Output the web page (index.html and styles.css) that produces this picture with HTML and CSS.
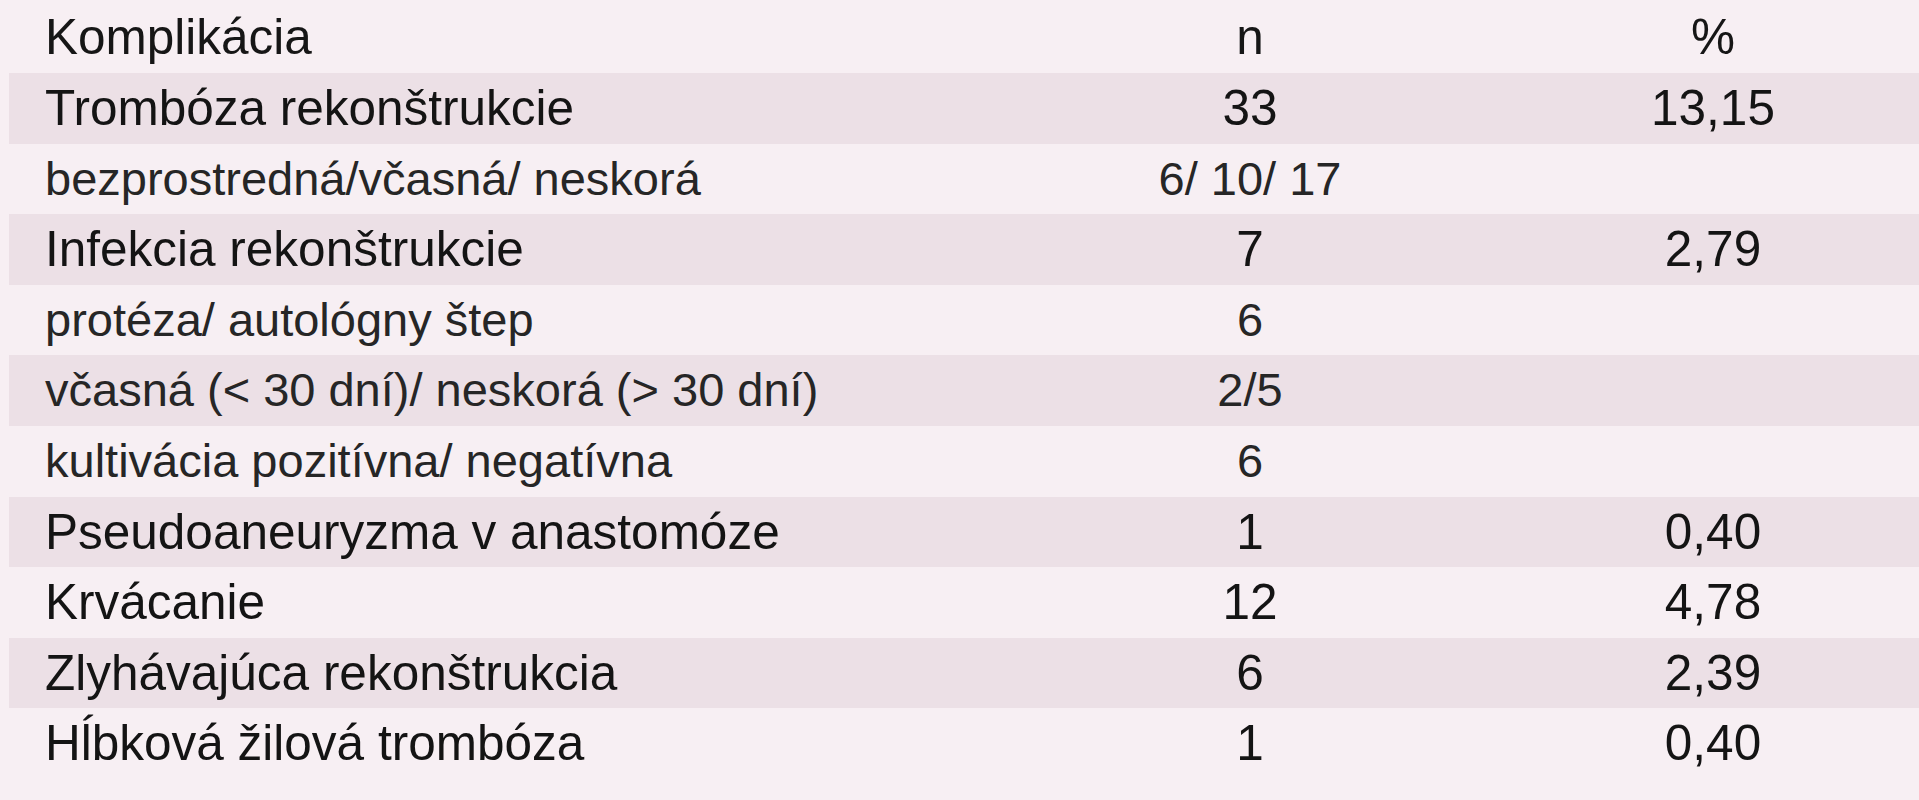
FILE: index.html
```html
<!DOCTYPE html>
<html lang="sk">
<head>
<meta charset="utf-8">
<title>Komplikácie</title>
<link rel="stylesheet" href="styles.css">
</head>
<body>
<table class="tbl">
  <colgroup>
    <col class="c-name">
    <col class="c-n">
    <col class="c-pct">
  </colgroup>
  <thead>
    <tr class="head">
      <th class="name">Komplikácia</th>
      <th class="num">n</th>
      <th class="num">%</th>
    </tr>
  </thead>
  <tbody>
    <tr class="main stripe"><td class="name">Trombóza rekonštrukcie</td><td class="num">33</td><td class="num">13,15</td></tr>
    <tr class="sub"><td class="name">bezprostredná/včasná/ neskorá</td><td class="num">6/ 10/ 17</td><td class="num"></td></tr>
    <tr class="main stripe"><td class="name">Infekcia rekonštrukcie</td><td class="num">7</td><td class="num">2,79</td></tr>
    <tr class="sub"><td class="name">protéza/ autológny štep</td><td class="num">6</td><td class="num"></td></tr>
    <tr class="sub stripe"><td class="name">včasná (&lt; 30 dní)/ neskorá (&gt; 30 dní)</td><td class="num">2/5</td><td class="num"></td></tr>
    <tr class="sub"><td class="name">kultivácia pozitívna/ negatívna</td><td class="num">6</td><td class="num"></td></tr>
    <tr class="main stripe"><td class="name">Pseudoaneuryzma v anastomóze</td><td class="num">1</td><td class="num">0,40</td></tr>
    <tr class="main"><td class="name">Krvácanie</td><td class="num">12</td><td class="num">4,78</td></tr>
    <tr class="main stripe"><td class="name">Zlyhávajúca rekonštrukcia</td><td class="num">6</td><td class="num">2,39</td></tr>
    <tr class="main"><td class="name">Hĺbková žilová trombóza</td><td class="num">1</td><td class="num">0,40</td></tr>
  </tbody>
</table>
</body>
</html>
```
FILE: styles.css
```css
html, body {
  margin: 0;
  padding: 0;
  background: #f7eff3;
}

body {
  font-family: "Liberation Sans", Arial, sans-serif;
  color: #161616;
}

.tbl {
  margin-left: 9px;
  width: 1910px;
  border-collapse: collapse;
  table-layout: fixed;
}

.c-name { width: 984px; }
.c-n { width: 514px; }
.c-pct { width: 412px; }

.tbl th,
.tbl td {
  padding: 0;
  font-weight: normal;
  white-space: nowrap;
  vertical-align: middle;
}

.head th {
  height: 73px;
  font-size: 49.5px;
  line-height: 73px;
}

.tbl tbody tr {
  height: 70.6px;
}

.main td {
  font-size: 49.5px;
  line-height: 70.6px;
  color: #141414;
}

.sub td {
  font-size: 47px;
  line-height: 70.6px;
  color: #262626;
}

.stripe {
  background: #ece0e6;
}

.name {
  text-align: left;
  padding-left: 36px !important;
}

.num {
  text-align: center;
}
```
